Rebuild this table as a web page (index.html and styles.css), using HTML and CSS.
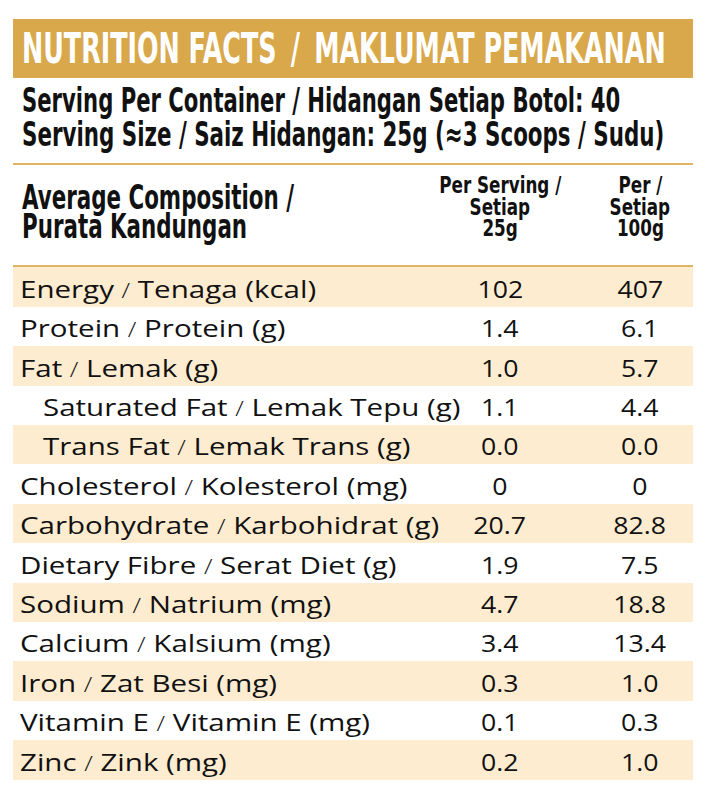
FILE: index.html
```html
<!DOCTYPE html>
<html>
<head>
<meta charset="utf-8">
<link rel="stylesheet" href="styles.css">
</head>
<body>
<div class="label">
  <div class="band cf"><span class="cx title">NUTRITION FACTS <span class="tsl">/</span> MAKLUMAT PEMAKANAN</span></div>
  <div class="serving cf">
    <div class="ln"><span class="cx sv1">Serving Per Container / Hidangan Setiap Botol: 40</span></div>
    <div class="ln"><span class="cx sv2">Serving Size / Saiz Hidangan: 25g (≈3 Scoops / Sudu)</span></div>
  </div>
  <div class="head cf">
    <div class="comp">
      <div class="ln"><span class="cx cp">Average Composition /</span></div>
      <div class="ln"><span class="cx cp">Purata Kandungan</span></div>
    </div>
    <div class="ph">
      <div class="hl"><span class="cx hc">Per Serving /</span></div>
      <div class="hl"><span class="cx hc">Setiap</span></div>
      <div class="hl"><span class="cx hc">25g</span></div>
    </div>
    <div class="ph c3">
      <div class="hl"><span class="cx hc">Per /</span></div>
      <div class="hl"><span class="cx hc">Setiap</span></div>
      <div class="hl"><span class="cx hc">100g</span></div>
    </div>
  </div>
  <div class="rows">
    <div class="row"><div class="name"><span class="t">Energy <span class="sl">/</span> Tenaga (kcal)</span></div><div class="v"><span class="n">102</span></div><div class="v v2"><span class="n">407</span></div></div>
    <div class="row"><div class="name"><span class="t">Protein <span class="sl">/</span> Protein (g)</span></div><div class="v"><span class="n">1.4</span></div><div class="v v2"><span class="n">6.1</span></div></div>
    <div class="row"><div class="name"><span class="t">Fat <span class="sl">/</span> Lemak (g)</span></div><div class="v"><span class="n">1.0</span></div><div class="v v2"><span class="n">5.7</span></div></div>
    <div class="row"><div class="name ind"><span class="t">Saturated Fat <span class="sl">/</span> Lemak Tepu (g)</span></div><div class="v"><span class="n">1.1</span></div><div class="v v2"><span class="n">4.4</span></div></div>
    <div class="row"><div class="name ind"><span class="t">Trans Fat <span class="sl">/</span> Lemak Trans (g)</span></div><div class="v"><span class="n">0.0</span></div><div class="v v2"><span class="n">0.0</span></div></div>
    <div class="row"><div class="name"><span class="t">Cholesterol <span class="sl">/</span> Kolesterol (mg)</span></div><div class="v"><span class="n">0</span></div><div class="v v2"><span class="n">0</span></div></div>
    <div class="row"><div class="name"><span class="t">Carbohydrate <span class="sl">/</span> Karbohidrat (g)</span></div><div class="v"><span class="n">20.7</span></div><div class="v v2"><span class="n">82.8</span></div></div>
    <div class="row"><div class="name"><span class="t">Dietary Fibre <span class="sl">/</span> Serat Diet (g)</span></div><div class="v"><span class="n">1.9</span></div><div class="v v2"><span class="n">7.5</span></div></div>
    <div class="row"><div class="name"><span class="t">Sodium <span class="sl">/</span> Natrium (mg)</span></div><div class="v"><span class="n">4.7</span></div><div class="v v2"><span class="n">18.8</span></div></div>
    <div class="row"><div class="name"><span class="t">Calcium <span class="sl">/</span> Kalsium (mg)</span></div><div class="v"><span class="n">3.4</span></div><div class="v v2"><span class="n">13.4</span></div></div>
    <div class="row"><div class="name"><span class="t">Iron <span class="sl">/</span> Zat Besi (mg)</span></div><div class="v"><span class="n">0.3</span></div><div class="v v2"><span class="n">1.0</span></div></div>
    <div class="row"><div class="name"><span class="t">Vitamin E <span class="sl">/</span> Vitamin E (mg)</span></div><div class="v"><span class="n">0.1</span></div><div class="v v2"><span class="n">0.3</span></div></div>
    <div class="row"><div class="name"><span class="t">Zinc <span class="sl">/</span> Zink (mg)</span></div><div class="v"><span class="n">0.2</span></div><div class="v v2"><span class="n">1.0</span></div></div>
  </div>
</div>
</body>
</html>
```
FILE: styles.css
```css
body {
  margin: 0;
  background: #ffffff;
}

.label {
  width: 680px;
  margin: 19px 0 0 13px;
  color: #111111;
  overflow: hidden;
}

.cf {
  font-family: "DejaVu Sans Condensed", "DejaVu Sans", sans-serif;
  font-stretch: condensed;
  font-weight: bold;
}

.cx {
  display: inline-block;
  white-space: nowrap;
  transform-origin: 0 50%;
  transform: scaleX(var(--sx, 0.7));
}

.band {
  height: 59px;
  box-sizing: border-box;
  padding: 1px 0 0 9px;
  background: #d9a84b;
  line-height: 58px;
  font-size: 42.5px;
  white-space: nowrap;
  overflow: hidden;
}

.title {
  color: #ffffff;
  --sx: 0.664;
}

.tsl {
  margin: 0 8px;
}

.serving {
  padding: 6.4px 0 10.6px 9px;
  border-bottom: 2px solid #e0b463;
  font-size: 33.5px;
  white-space: nowrap;
  overflow: hidden;
}

.serving .ln {
  height: 34px;
  line-height: 34px;
}

.sv1 { --sx: 0.702; }
.sv2 { --sx: 0.71; }

.head {
  display: grid;
  grid-template-columns: 432px 110px 138px;
  height: 100.5px;
  border-bottom: 2px solid #e0b463;
  overflow: hidden;
}

.comp {
  padding: 18px 0 0 9px;
  font-size: 33.5px;
  white-space: nowrap;
}

.comp .ln {
  height: 29px;
  line-height: 29px;
}

.cp { --sx: 0.71; }

.ph {
  padding-top: 9.2px;
  display: flex;
  flex-direction: column;
  align-items: center;
  font-size: 23.3px;
  white-space: nowrap;
}

.ph.c3 {
  padding-left: 32px;
}

.hl {
  height: 21.5px;
  line-height: 21.5px;
  display: flex;
  justify-content: center;
}

.hc {
  transform-origin: 50% 50%;
  --sx: 0.8;
}

.rows {
  font-family: "Open Sans", "Noto Sans", sans-serif;
  font-size: 23.8px;
  overflow: hidden;
}

.row {
  display: grid;
  grid-template-columns: 432px 110px 138px;
  height: 39.4px;
  box-sizing: border-box;
  padding-top: 2.4px;
  line-height: 39.4px;
}

.row:nth-child(odd) {
  background: #fdecd0;
}

.name {
  padding-left: 7px;
  white-space: nowrap;
}

.name.ind {
  padding-left: 30px;
}

.t {
  display: inline-block;
  transform-origin: 0 50%;
  transform: scaleX(1.24);
}

.sl {
  font-size: 0.85em;
  font-weight: 300;
}

.v {
  text-align: center;
}

.n {
  display: inline-block;
  transform: scaleX(1.12);
}

.v2 {
  padding-left: 32px;
}
```
